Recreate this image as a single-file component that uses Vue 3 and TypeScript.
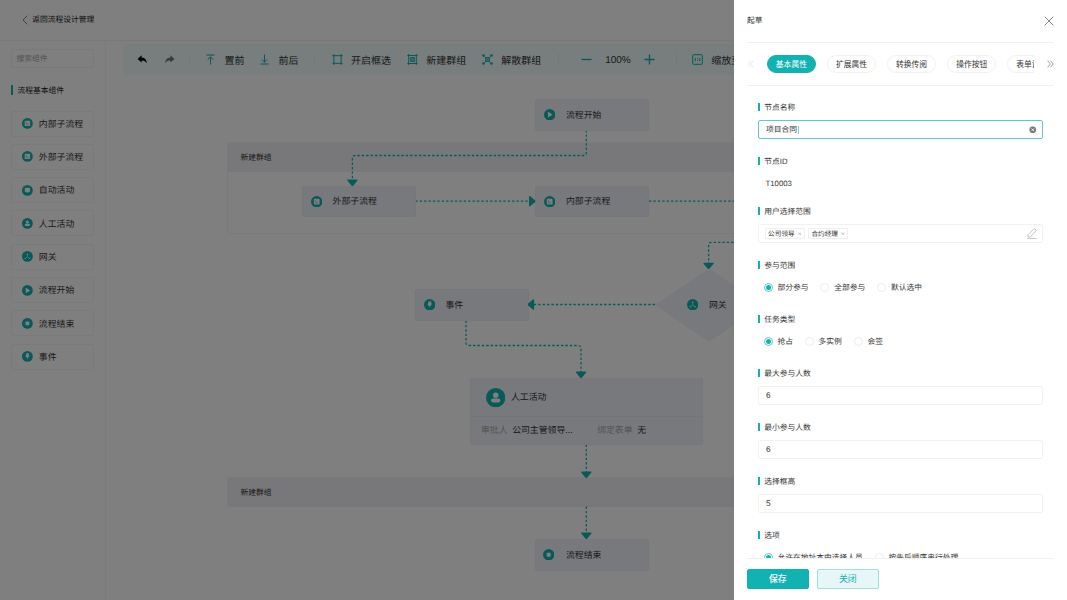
<script setup lang="ts">
import { ref } from 'vue'

type Kind = 'sub' | 'auto' | 'user' | 'gate' | 'start' | 'end' | 'event'

const glyphs: Record<Kind, string> = {
  sub: '<rect x="5" y="5" width="10" height="10" rx="1.6" fill="#fff"/><path d="M8 7.6v2.200l3.800 2.600M8 12.400h1.400" stroke="#13b2b2" stroke-width="1.100" fill="none"/>',
  auto: '<path d="M5.200 6.400q0-1.400 1.400-1.400h6.800q1.400 0 1.400 1.400v5.200q0 1.400-1.400 1.400H12l-2 1.800-2-1.800H6.600q-1.400 0-1.400-1.400z" fill="#fff"/>',
  user: '<circle cx="10" cy="7.500" r="2.800" fill="#fff"/><rect x="5.200" y="10.800" width="9.600" height="4.200" rx="2.100" fill="#fff"/>',
  gate: '<path d="M10 6.500V10.500L6.200 13.500M10 10.500l3.800 3" stroke="#fff" stroke-width="1" fill="none"/><circle cx="10" cy="5.800" r="1.300" fill="#fff"/><circle cx="5.900" cy="13.600" r="1.200" fill="#fff"/><circle cx="14.100" cy="13.600" r="1.200" fill="#fff"/>',
  start: '<path d="M7 5.900q0-1 .9-.5l6.400 4q.8.600 0 1.200l-6.400 4q-.9.500-.9-.5z" fill="#fff"/>',
  end: '<rect x="6.500" y="6.500" width="7" height="7" rx="1.300" fill="#fff"/>',
  event: '<path d="M8 4.200h5l-.9 3.800h2.300L8.800 16l.9-4.800H6.400z" fill="#fff"/>'
}

const components: { kind: Kind; name: string }[] = [
  { kind: 'sub', name: '内部子流程' },
  { kind: 'sub', name: '外部子流程' },
  { kind: 'auto', name: '自动活动' },
  { kind: 'user', name: '人工活动' },
  { kind: 'gate', name: '网关' },
  { kind: 'start', name: '流程开始' },
  { kind: 'end', name: '流程结束' },
  { kind: 'event', name: '事件' }
]

const nodes: { kind: Kind; name: string; x: number; y: number }[] = [
  { kind: 'start', name: '流程开始', x: 535, y: 99 },
  { kind: 'sub', name: '外部子流程', x: 301.700, y: 185.500 },
  { kind: 'sub', name: '内部子流程', x: 535, y: 185.500 },
  { kind: 'event', name: '事件', x: 414.500, y: 289 },
  { kind: 'end', name: '流程结束', x: 535, y: 539 }
]

const edges: string[] = [
  'M586.300 130V152.500Q586.300 155.500 583.300 155.500H355.400Q352.400 155.500 352.400 158.500V180',
  'M415.300 201.200H529',
  'M649 201.200H760',
  'M760 242.300H711.600Q708.600 242.300 708.600 245.300V263',
  'M655 304.500H534',
  'M466 320.500V342.500Q466 345.500 469 345.500H578Q581 345.500 581 348.500V372',
  'M586.300 444.500V472',
  'M586.300 506.500V533'
]

const arrows: [number, number, number][] = [
  [352.400, 186, 0],
  [535.500, 201.200, -90],
  [708.600, 269.200, 0],
  [527.600, 304.500, 90],
  [581, 378, 0],
  [586.300, 478, 0],
  [586.300, 539, 0]
]

const tabs = ['基本属性', '扩展属性', '转换传阅', '操作按钮', '表单设置']
const activeTab = ref(0)

interface Field {
  label: string
  type: 'name' | 'text' | 'tags' | 'choice' | 'input'
  value?: string
  options?: string[]
}
const fields: Field[] = [
  { label: '节点名称', type: 'name', value: '项目合同' },
  { label: '节点ID', type: 'text', value: 'T10003' },
  { label: '用户选择范围', type: 'tags', options: ['公司领导', '合约经理'] },
  { label: '参与范围', type: 'choice', options: ['部分参与', '全部参与', '默认选中'] },
  { label: '任务类型', type: 'choice', options: ['抢占', '多实例', '会签'] },
  { label: '最大参与人数', type: 'input', value: '6' },
  { label: '最小参与人数', type: 'input', value: '6' },
  { label: '选择框高', type: 'input', value: '5' },
  { label: '选项', type: 'choice', options: ['允许在地址本中选择人员', '按先后顺序串行处理'] }
]
</script>

<template>
  <div class="app">
    <header class="top">
      <svg class="back" viewBox="0 0 6 10"><path d="M5.300.7L1 5l4.300 4.300" /></svg>
      <span>返回流程设计管理</span>
    </header>

    <div class="main">
      <aside class="side">
        <div class="search">搜索组件</div>
        <h3 class="side-title"><span>流程基本组件</span></h3>
        <ul class="items">
          <li v-for="c in components" :key="c.name" class="item">
            <svg class="badge small" viewBox="0 0 20 20"><circle cx="10" cy="10" r="10" fill="#13b2b2" /><g v-html="glyphs[c.kind]" /></svg>
            <span>{{ c.name }}</span>
          </li>
        </ul>
      </aside>

      <div class="toolbar">
        <div class="tool undo">
          <svg viewBox="0 0 11 11" width="11" height="11"><path d="M4.600 1.200L.5 4.900l4.100 3.700V6.400c2.800-.1 4.200.9 5.300 3.200C9.700 6 8 3.700 4.600 3.500z" fill="#000" /></svg>
        </div>
        <div class="tool redo">
          <svg viewBox="0 0 11 11" width="11" height="11"><path d="M6.400 1.200l4.100 3.700-4.100 3.700V6.400C3.600 6.300 2.200 7.300 1.100 9.600 1.300 6 3 3.700 6.400 3.500z" fill="#777" /></svg>
        </div>
        <i class="sep" />
        <div class="tool front">
          <svg viewBox="0 0 11 11" width="11" height="11" class="line"><path d="M1.500 1h8M5.500 10.500V3M2.700 5.600L5.500 2.800l2.800 2.800" /></svg>
          <span>置前</span>
        </div>
        <div class="tool backward">
          <svg viewBox="0 0 11 11" width="11" height="11" class="line"><path d="M1.500 10h8M5.500.5v7.500M2.700 5.400l2.800 2.800 2.800-2.800" /></svg>
          <span>前后</span>
        </div>
        <i class="sep second" />
        <div class="tool frame">
          <svg viewBox="0 0 11 11" width="11" height="11" class="line"><path d="M1.900 0v11M9.100 0v11M.3 1.700h10.400M.3 9.300h10.400" /></svg>
          <span>开启框选</span>
        </div>
        <div class="tool group">
          <svg viewBox="0 0 11 11" width="11" height="11" class="line"><path d="M1.700 0v11M9.300 0v11M.3 1.500h10.400M.3 9.500h10.400" /><rect x="3.800" y="3.600" width="3.400" height="3.800" fill="#13b2b2" fill-opacity=".45" /></svg>
          <span>新建群组</span>
        </div>
        <div class="tool ungroup">
          <svg viewBox="0 0 11 11" width="11" height="11"><g fill="#13b2b2"><circle cx="1.500" cy="1.500" r="1.300" /><circle cx="9.500" cy="1.500" r="1.300" /><circle cx="1.500" cy="9.500" r="1.300" /><circle cx="9.500" cy="9.500" r="1.300" /></g><path d="M1.500 1.500l2 2M9.500 1.500l-2 2M1.500 9.500l2-2M9.500 9.500l-2-2" stroke="#13b2b2" stroke-width=".7" /><rect x="3.400" y="3.400" width="4.200" height="4.200" fill="#13b2b2" fill-opacity=".6" stroke="#13b2b2" stroke-width=".8" /></svg>
          <span>解散群组</span>
        </div>
        <i class="sep third" />
        <div class="zoom">
          <svg viewBox="0 0 11 11" width="11" height="11" class="line bold"><path d="M.5 5.500h10" /></svg>
          <span class="latin percent">100%</span>
          <svg viewBox="0 0 11 11" width="11" height="11" class="line bold"><path d="M.5 5.500h10M5.500.5v10" /></svg>
        </div>
        <i class="sep fourth" />
        <div class="tool fit">
          <svg viewBox="0 0 11 11" width="11" height="11" class="line"><rect x=".7" y=".7" width="9.600" height="9.600" rx=".8" /><path d="M3.300 3.800v3.400M7.700 3.800v3.400M5.500 4.200v.9M5.500 6v.9" /></svg>
          <span>缩放至</span>
        </div>
      </div>
    </div>

    <div class="canvas">
      <div class="cluster first"><div class="cluster-head">新建群组</div></div>
      <div class="cluster last"><div class="cluster-head">新建群组</div></div>

      <svg class="wires" width="1067" height="600" viewBox="0 0 1067 600">
        <path d="M655 305L706 270.600Q709 268.800 712 270.600L763 305L712 340Q709 341.800 706 340Z" fill="#f1f2fa" />
        <path v-for="e in edges" :key="e" :d="e" class="edge" />
      </svg>

      <div v-for="n in nodes" :key="n.name" class="node" :class="n.kind" :style="{ left: n.x + 'px', top: n.y + 'px' }">
        <svg class="badge" viewBox="0 0 20 20"><circle cx="10" cy="10" r="10" fill="#13b2b2" /><g v-html="glyphs[n.kind]" /></svg>
        <span>{{ n.name }}</span>
      </div>

      <div class="gateway">
        <svg class="badge" viewBox="0 0 20 20"><circle cx="10" cy="10" r="10" fill="#13b2b2" /><g v-html="glyphs.gate" /></svg>
        <span>网关</span>
      </div>

      <div class="card">
        <div class="card-head">
          <svg class="avatar" viewBox="0 0 20 20"><circle cx="10" cy="10" r="10" fill="#13b2b2" /><g v-html="glyphs.user" /></svg>
          <span>人工活动</span>
        </div>
        <div class="card-body">
          <span class="muted">审批人</span><span class="who">公司主管领导...</span>
          <span class="muted">绑定表单</span><span class="none">无</span>
        </div>
      </div>

      <svg class="wires" width="1067" height="600" viewBox="0 0 1067 600">
        <path v-for="(a, i) in arrows" :key="i" d="M-4.400-6.500H4.400Q5.900-6.500 4.900-5.200L1-.6Q0 .4-1-.6L-4.900-5.200Q-5.900-6.500-4.400-6.500Z" fill="#13b2b2" :transform="`translate(${a[0]} ${a[1]}) rotate(${a[2]})`" />
      </svg>
    </div>

    <div class="mask" />

    <section class="drawer">
      <div class="drawer-head">
        <span class="drawer-title">起草</span>
        <svg width="10" height="10" viewBox="0 0 10 10"><path d="M.7.700l8.600 8.600M9.300.7L.7 9.300" stroke="#777" stroke-width=".9" /></svg>
      </div>
      <nav class="tabs">
        <svg class="more prev" viewBox="0 0 7 8"><path d="M3.500.700L.8 4l2.700 3.300M6.300.7L3.600 4l2.700 3.300" /></svg>
        <div class="tab-list">
          <button v-for="(t, i) in tabs" :key="t" class="tab" :class="{ active: i === activeTab }" @click="activeTab = i">{{ t }}</button>
        </div>
        <svg class="more" viewBox="0 0 7 8"><path d="M.7.700L3.400 4 .7 7.300M3.500.7L6.200 4 3.500 7.300" /></svg>
      </nav>
      <div class="form">
        <div v-for="f in fields" :key="f.label" class="field" :class="f.type">
          <div class="label"><span>{{ f.label }}</span></div>
          <div v-if="f.type === 'name'" class="box focus">
            <span class="typed">{{ f.value }}</span><i class="caret" />
            <svg class="clear" viewBox="0 0 8 8"><circle cx="4" cy="4" r="3.600" fill="#777" /><path d="M2.600 2.600l2.800 2.800M5.400 2.600L2.600 5.400" stroke="#fff" stroke-width=".9" /></svg>
          </div>
          <div v-else-if="f.type === 'text'" class="plain latin">{{ f.value }}</div>
          <div v-else-if="f.type === 'tags'" class="box tag-box">
            <span v-for="o in f.options" :key="o" class="tag">{{ o }}<svg viewBox="0 0 4 4"><path d="M.4.400l3.200 3.200M3.600.4L.4 3.600" /></svg></span>
            <svg class="pen" viewBox="0 0 10 11"><path d="M.3 10.400h9.400M1 9V6.700L6.800 1q.6-.5 1.200 0l.9.900q.6.600 0 1.200L3.200 9z" /></svg>
          </div>
          <div v-else-if="f.type === 'choice'" class="radios">
            <label v-for="(o, i) in f.options" :key="o" class="radio" :class="{ on: i === 0 }"><i /><span>{{ o }}</span></label>
          </div>
          <div v-else class="box number latin">{{ f.value }}</div>
        </div>
      </div>
      <footer class="foot">
        <button class="btn primary">保存</button>
        <button class="btn">关闭</button>
      </footer>
    </section>
  </div>
</template>

<style>
html, body { margin: 0; overflow: hidden; }
</style>

<style scoped>
.app {
  position: relative;
  width: 1067px;
  height: 600px;
  overflow: hidden;
  background: #fff;
  color: #333;
  font: 7.78px/1.3 "Noto Sans CJK SC", sans-serif;
  text-rendering: geometricPrecision;
  white-space: nowrap;
}
.app * { box-sizing: border-box; }
.app svg { display: block; flex: none; }
.latin { font-family: "Liberation Sans", "Noto Sans CJK SC", sans-serif; }
.top {
  height: 39.500px;
  display: flex;
  align-items: center;
  padding-left: 21.500px;
  gap: 4.700px;
  color: #222;
  box-shadow: 0 0 2px rgba(0, 0, 0, .16);
}
.back { width: 6px; height: 10px; fill: none; stroke: #666; stroke-width: .8; }
.main { display: flex; height: 560.500px; }
.side {
  width: 106px;
  padding: 9.500px 11px 0;
  border-right: 1px solid #f4f4f4;
}
.search {
  height: 19px;
  border: 1px solid #f3f3f3;
  border-radius: 2px;
  padding-left: 4.500px;
  line-height: 17px;
  color: #aaa;
}
.side-title {
  margin: 17px 0 15.500px;
  height: 10px;
  line-height: 10px;
  font-size: 7.780px;
  font-weight: 400;
  color: #222;
  display: flex;
  align-items: center;
}
.side-title::before { content: ""; width: 2px; height: 10px; margin-right: 4.500px; background: #13b2b2; }
.side-title span { padding-top: 1px; }
.items { margin: 0; padding: 0; list-style: none; display: flex; flex-direction: column; gap: 7.330px; }
.item {
  height: 26px;
  display: flex;
  align-items: center;
  gap: 6.200px;
  padding-left: 9.800px;
  border: 1px solid #f4f4f4;
  border-radius: 2px;
  font-size: 8.890px;
}
.badge { width: 11.400px; height: 11.400px; }
.badge.small { width: 10.800px; height: 10.800px; }

.toolbar {
  flex: 1;
  margin: 4.500px 0 0 17px;
  height: 30.500px;
  padding-top: .500px;
  display: flex;
  align-items: center;
  background: #f0fbfb;
  border-radius: 3px;
  font-size: 10px;
}
.tool { display: flex; align-items: center; flex: none; }
.line { fill: none; stroke: #13b2b2; stroke-width: 1; }
.line.bold { stroke-width: 1.300; }
.sep { width: 1px; height: 13px; background: #e6f1f1; flex: none; margin-left: 14px; }
.sep.second { margin-left: 15.500px; }
.sep.third { margin-left: 17px; }
.sep.fourth { margin-left: 21px; }
.undo { margin-left: 14px; }
.redo { margin-left: 16px; }
.front { margin-left: 15.300px; gap: 8.200px; }
.backward { margin-left: 15px; gap: 8px; }
.frame { margin-left: 17px; gap: 8px; }
.group { margin-left: 16.200px; gap: 8px; }
.ungroup { margin-left: 16px; gap: 8px; }
.zoom { display: flex; align-items: center; margin-left: 22px; gap: 13px; }
.percent { padding-top: 1.500px; }
.fit { margin-left: 15.500px; gap: 8px; }

.canvas { position: absolute; inset: 0; pointer-events: none; }
.wires { position: absolute; left: 0; top: 0; }
.edge { fill: none; stroke: #13b2b2; stroke-width: 1.300; stroke-dasharray: 2.400 2; }
.cluster { position: absolute; left: 227px; width: 560px; border: 1px solid #f5f5f7; border-radius: 2px; }
.cluster.first { top: 141.500px; height: 92px; }
.cluster.last { top: 477px; height: 30px; }
.cluster-head { height: 29px; background: #f0f0f4; padding-left: 12.500px; line-height: 30px; }
.node {
  position: absolute;
  width: 114px;
  height: 31.500px;
  display: flex;
  align-items: center;
  gap: 10.500px;
  padding-left: 8px;
  background: #f1f2fa;
  border: 1px solid #eeeff7;
  border-radius: 2px;
  font-size: 8.890px;
}
.node.end { padding-left: 6.500px; gap: 12px; }
.gateway { position: absolute; left: 686.500px; top: 297.500px; height: 14px; display: flex; align-items: center; gap: 11px; font-size: 8.890px; }
.card {
  position: absolute;
  left: 470px;
  top: 377.500px;
  width: 233px;
  height: 67.500px;
  background: #f1f2fa;
  border: 1px solid #eeeff7;
  border-radius: 2px;
  font-size: 8.890px;
}
.card-head { height: 38.500px; display: flex; align-items: center; gap: 6px; padding-left: 14.500px; border-bottom: 1px solid #e9eaf2; }
.avatar { width: 19.400px; height: 19.400px; }
.card-body { height: 26px; display: flex; align-items: center; padding-left: 10px; }
.muted { color: #aaa; }
.who { width: 85px; margin-left: 4.500px; }
.none { margin-left: 4.500px; }

.mask { position: absolute; inset: 0; background: rgba(0, 0, 0, .5); }
.drawer {
  position: absolute;
  top: 0;
  right: 0;
  width: 333.500px;
  height: 600px;
  padding: 0 13.500px;
  background: #fff;
  display: flex;
  flex-direction: column;
}
.drawer-head { height: 43px; flex: none; display: flex; align-items: center; justify-content: space-between; border-bottom: 1px solid #f1f1f1; }
.drawer-title { padding-top: 1px; }
.tabs { height: 43px; flex: none; display: flex; align-items: center; border-bottom: 1px solid #f1f1f1; }
.tab-list { flex: 1; display: flex; gap: 11.300px; overflow: hidden; margin: 0 13px; }
.more { width: 7px; height: 8px; fill: none; stroke: #777; stroke-width: .7; }
.more.prev { stroke: #ddd; }
.tab {
  width: 48.800px;
  height: 18px;
  flex: none;
  padding: 0;
  border: 1px solid #f1f1f1;
  border-radius: 9px;
  background: #fff;
  color: #333;
  font: inherit;
  line-height: 16px;
  text-align: center;
}
.tab.active { background: #13b2b2; border-color: #13b2b2; color: #fff; }
.form { flex: 1; min-height: 0; overflow: hidden; padding: 16px 11px 0; }
.field { height: 54px; }
.field.text { height: 50px; }
.label { height: 10px; line-height: 10px; margin-bottom: 8px; display: flex; align-items: center; }
.label::before { content: ""; width: 1.600px; height: 8px; margin-right: 4.700px; background: #13b2b2; }
.label span { padding-top: 1.500px; }
.field.text .label { font-family: "Liberation Sans", "Noto Sans CJK SC", sans-serif; }
.field.text .label span { padding-top: 1px; }
.box {
  height: 19px;
  display: flex;
  align-items: center;
  padding: 0 5px 0 7px;
  border: 1px solid #f2f2f2;
  border-radius: 2px;
}
.box.focus { border-color: #5ccaca; }
.box.number { font-size: 8.300px; }
.typed { padding-top: 1.500px; }
.caret { width: 1px; height: 8px; background: #7fd4d4; margin-left: 1px; }
.clear { width: 7.500px; height: 7.500px; margin-left: auto; }
.plain { height: 19px; line-height: 19px; padding-left: 7.500px; }
.tag-box { padding-left: 6px; gap: 3.400px; }
.tag {
  height: 11.500px;
  width: 40px;
  display: flex;
  align-items: center;
  gap: 3px;
  padding-left: 2px;
  border: 1px solid #f0f0f0;
  border-radius: 1px;
  font-size: 6.670px;
}
.tag svg { width: 3.600px; height: 3.600px; stroke: #999; stroke-width: .6; }
.pen { width: 10px; height: 11px; margin-left: auto; fill: none; stroke: #aaa; stroke-width: .7; }
.radios { height: 19px; display: flex; align-items: center; gap: 12px; padding-left: 5.700px; }
.radio { display: flex; align-items: center; gap: 4.700px; }
.radio span { padding-top: 1.500px; }
.radio i { width: 9px; height: 9px; border: 1px solid #ededed; border-radius: 50%; display: flex; align-items: center; justify-content: center; }
.radio.on i { border-color: #5ccaca; }
.radio.on i::after { content: ""; width: 5px; height: 5px; border-radius: 50%; background: #13b2b2; }
.foot { height: 42.500px; flex: none; display: flex; gap: 8.500px; padding-top: 10.500px; border-top: 1px solid #f1f1f1; }
.btn {
  width: 61.500px;
  height: 20px;
  padding: 0;
  font: inherit;
  font-size: 8.890px;
  line-height: 18px;
  color: #13b2b2;
  background: #e7f7f7;
  border: 1px solid #a0dfdf;
  border-radius: 2px;
}
.btn.primary { background: #13b2b2; border-color: #13b2b2; color: #fff; font-weight: 500; }
</style>
